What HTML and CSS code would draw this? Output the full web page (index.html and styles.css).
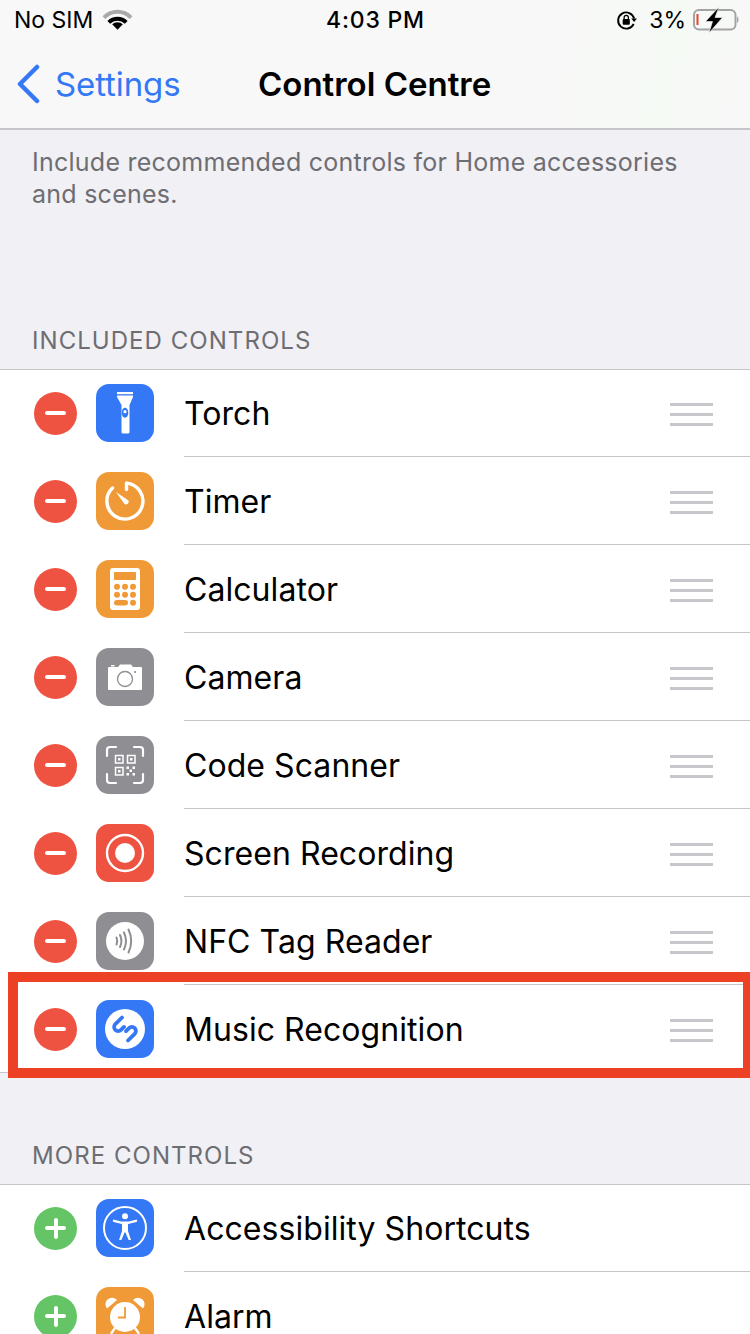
FILE: index.html
```html
<!DOCTYPE html>
<html lang="en">
<head>
	<meta charset="UTF-8">
	<title>Control Centre</title>
	<link rel="stylesheet" href="styles.css">
</head>
<body>
	<div id="page">
		<div id="top">
			<div class="status">
				<div class="status-left">
					<span>No SIM</span>
					<svg class="wifi" width="31" height="24" viewBox="0 0 32 24">
						<path d="M2 9.500C10 1.500 22 1.500 30 9.500" fill="none" stroke="#a9a9a9" stroke-width="4"/>
						<path d="M7 14.500C12 9.500 20 9.500 25 14.500" fill="none" stroke="#000" stroke-width="4"/>
						<path d="M16 22l-5.500-5.500C13.500 13.500 18.500 13.500 21.500 16.500z" fill="#000"/>
					</svg>
				</div>
				<div class="status-time">4:03 PM</div>
				<div class="status-right">
					<svg class="lock" width="21" height="21" viewBox="0 0 22 22">
						<path d="M18.500 14.500A8.500 8.500 0 1 1 19 9" fill="none" stroke="#000" stroke-width="2"/>
						<path d="M16 9h6l-3 3.500z" fill="#000"/>
						<rect x="7" y="9.500" width="7.500" height="6" rx="1" fill="#000"/>
						<path d="M8.500 10V8a2.200 2.200 0 0 1 4.500 0v2" fill="none" stroke="#000" stroke-width="1.300"/>
					</svg>
					<span>3%</span>
					<svg width="46" height="26" viewBox="0 0 46 26">
						<rect x="1" y="3" width="41.500" height="19.500" rx="5" fill="none" stroke="#a3a3a3" stroke-width="2"/>
						<rect x="3.500" y="7" width="2" height="11" fill="#e9402f"/>
						<path d="M44 9.500c2 .5 2 6 0 6.500z" fill="#a3a3a3"/>
						<path d="M26 0L12.500 14.500h7L16 26 29.500 10.500h-7.500z" fill="#000" stroke="#f9f9f9" stroke-width=".6"/>
					</svg>
				</div>
			</div>
			<div class="nav">
				<svg class="back" width="26" height="40" viewBox="0 0 26 40">
					<path d="M22 3L5 20l17 17" fill="none" stroke="#3478f6" stroke-width="4.500" stroke-linecap="round" stroke-linejoin="round"/>
				</svg>
				<span class="back-text">Settings</span>
				<span class="nav-title">Control Centre</span>
			</div>
		</div>

		<p class="note">Include recommended controls for Home accessories and scenes.</p>

		<h2 class="sec-title first">INCLUDED CONTROLS</h2>
		<ul class="list">
			<li class="row">
				<span class="btn minus"></span>
				<svg class="icon blue" viewBox="0 0 58 58">
					<rect x="21" y="8" width="16" height="2.200" fill="#fff"/>
					<path d="M21 11.500h16v1.500l-3.500 8v27a1.500 1.500 0 0 1-1.500 1.500h-5a1.500 1.500 0 0 1-1.500-1.500V21l-4.500-8z" fill="#fff"/>
					<ellipse cx="29" cy="28.700" rx="3.300" ry="5" fill="#3478f6"/>
					<circle cx="29" cy="27.700" r="1.600" fill="#fff"/>
				</svg>
				<span class="label">Torch</span>
				<span class="handle"><i></i><i></i><i></i></span>
			</li>
			<li class="row">
				<span class="btn minus"></span>
				<svg class="icon orange" viewBox="0 0 58 58">
					<path d="M30.500 11.100A18 18 0 1 1 16.500 16" fill="none" stroke="#fff" stroke-width="3.400" stroke-linecap="round"/>
					<path d="M30.500 11.100v6.400" fill="none" stroke="#fff" stroke-width="3.400" stroke-linecap="round"/>
					<path d="M20 20l12.500 8.500a2.800 2.800 0 0 1-4 3.500z" fill="#fff"/>
				</svg>
				<span class="label">Timer</span>
				<span class="handle"><i></i><i></i><i></i></span>
			</li>
			<li class="row">
				<span class="btn minus"></span>
				<svg class="icon orange" viewBox="0 0 58 58">
					<rect x="14" y="8" width="30" height="42" rx="3" fill="#fff"/>
					<rect x="18" y="12" width="22" height="8" rx="1" fill="#f09a37"/>
					<g fill="#f09a37">
						<circle cx="21" cy="26.700" r="3"/><circle cx="29" cy="26.700" r="3"/><circle cx="37" cy="26.700" r="3"/>
						<circle cx="21" cy="34.700" r="3"/><circle cx="29" cy="34.700" r="3"/><circle cx="37" cy="34.700" r="3"/>
						<rect x="18" y="40" width="14" height="5.500" rx="2.750"/><circle cx="37" cy="42.700" r="3"/>
					</g>
				</svg>
				<span class="label">Calculator</span>
				<span class="handle"><i></i><i></i><i></i></span>
			</li>
			<li class="row">
				<span class="btn minus"></span>
				<svg class="icon gray" viewBox="0 0 58 58">
					<path d="M13 19h9l2-2.500h11l2 2.500h8a1 1 0 0 1 1 1v21a1 1 0 0 1-1 1H13a1 1 0 0 1-1-1V20a1 1 0 0 1 1-1z" fill="#fff"/>
					<rect x="15" y="17" width="3.500" height="1.500" fill="#fff"/>
					<circle cx="29" cy="31" r="7.500" fill="none" stroke="#8e8e93" stroke-width="1.300"/>
					<circle cx="39" cy="24" r="1.100" fill="#8e8e93"/>
				</svg>
				<span class="label">Camera</span>
				<span class="handle"><i></i><i></i><i></i></span>
			</li>
			<li class="row">
				<span class="btn minus"></span>
				<svg class="icon gray" viewBox="0 0 58 58">
					<path d="M11 20v-6a3 3 0 0 1 3-3h6M38 11h6a3 3 0 0 1 3 3v6M47 38v6a3 3 0 0 1-3 3h-6M20 47h-6a3 3 0 0 1-3-3v-6" fill="none" stroke="#fff" stroke-width="2.200" stroke-linecap="round"/>
					<g fill="none" stroke="#fff" stroke-width="1.500">
						<rect x="19.500" y="19.500" width="7.500" height="7.500"/>
						<rect x="31.500" y="19.500" width="7.500" height="7.500"/>
						<rect x="19.500" y="31.500" width="7.500" height="7.500"/>
					</g>
					<g fill="#fff">
						<rect x="22" y="22" width="2.500" height="2.500"/><rect x="34" y="22" width="2.500" height="2.500"/><rect x="22" y="34" width="2.500" height="2.500"/>
						<rect x="30.500" y="30.500" width="2.500" height="2.500"/><rect x="36.500" y="30.500" width="2.500" height="2.500"/>
						<rect x="33.500" y="33.500" width="2.500" height="2.500"/>
						<rect x="30.500" y="37" width="2.500" height="2.500"/><rect x="36.500" y="37" width="2.500" height="2.500"/>
					</g>
				</svg>
				<span class="label">Code Scanner</span>
				<span class="handle"><i></i><i></i><i></i></span>
			</li>
			<li class="row">
				<span class="btn minus"></span>
				<svg class="icon red" viewBox="0 0 58 58">
					<circle cx="29" cy="29" r="18" fill="none" stroke="#fff" stroke-width="2.400"/>
					<circle cx="29" cy="29" r="10" fill="#fff"/>
				</svg>
				<span class="label">Screen Recording</span>
				<span class="handle"><i></i><i></i><i></i></span>
			</li>
			<li class="row">
				<span class="btn minus"></span>
				<svg class="icon gray" viewBox="0 0 58 58">
					<circle cx="29" cy="29" r="19" fill="#fff"/>
					<g fill="none" stroke="#8e8e93" stroke-width="2" stroke-linecap="round">
						<path d="M20.500 25.500a9 9 0 0 1 0 7"/>
						<path d="M24 23a14 14 0 0 1 0 12"/>
						<path d="M28 20.500a20 20 0 0 1 0 17"/>
						<path d="M32.500 17.500a27 27 0 0 1 0 23"/>
					</g>
				</svg>
				<span class="label">NFC Tag Reader</span>
				<span class="handle"><i></i><i></i><i></i></span>
			</li>
			<li class="row marked">
				<span class="btn minus"></span>
				<svg class="icon blue" viewBox="0 0 58 58">
					<circle cx="29" cy="29" r="20" fill="#fff"/>
					<g fill="none" stroke="#3478f6" stroke-width="3.800" stroke-linecap="round">
						<path d="M26 17.500l-6.700 6.700a4 4 0 0 0 5.700 5.700l3-3"/>
						<path d="M32 40.500l6.700-6.700a4 4 0 0 0-5.700-5.700l-3 3"/>
					</g>
				</svg>
				<span class="label">Music Recognition</span>
				<span class="handle"><i></i><i></i><i></i></span>
				<div class="mark"></div>
			</li>
		</ul>

		<h2 class="sec-title second">MORE CONTROLS</h2>
		<ul class="list">
			<li class="row">
				<span class="btn plus"></span>
				<svg class="icon blue" viewBox="0 0 58 58">
					<circle cx="29" cy="29" r="21" fill="none" stroke="#fff" stroke-width="2"/>
					<circle cx="29" cy="17.300" r="3" fill="#fff"/>
					<path d="M18 21.800l8 2h6l8-2" fill="none" stroke="#fff" stroke-width="2.400" stroke-linecap="round" stroke-linejoin="round"/>
					<path d="M26 23.500h6V32l3 9h-2.400L29.500 33.500h-1L25.400 41H23l3-9z" fill="#fff"/>
				</svg>
				<span class="label">Accessibility Shortcuts</span>
			</li>
			<li class="row">
				<span class="btn plus"></span>
				<svg class="icon orange" viewBox="0 0 58 58">
					<circle cx="29" cy="30" r="15" fill="#fff"/>
					<path d="M11 21.500a6.500 6.500 0 0 1 10-8.500z" fill="#fff"/>
					<path d="M47 21.500a6.500 6.500 0 0 0-10-8.500z" fill="#fff"/>
					<path d="M19 41l-3.500 5M39 41l3.500 5" fill="none" stroke="#fff" stroke-width="2.400" stroke-linecap="round"/>
					<path d="M29 20v10.500h-7" fill="none" stroke="#f09a37" stroke-width="1.800"/>
				</svg>
				<span class="label">Alarm</span>
			</li>
		</ul>
	</div>
</body>
</html>
```

FILE: styles.css
```css
*{
	margin: 0;
	padding: 0;
	box-sizing: border-box;
}
ul{
	list-style: none;
}
html, body{
	height: 100%;
	overflow: hidden;
}
body{
	background: #f0f0f5;
	font-family: Inter, "Liberation Sans", sans-serif;
	color: #000;
}
#page{
	height: 1334px;
	overflow: hidden;
}
#top{
	height: 130px;
	background: linear-gradient(100deg, #f8f8f8 70%, #f6faf5 88%, #f8f8f8);
	border-bottom: 2px solid #c6c6c8;
}
.status{
	height: 40px;
	padding: 0 11px 0 12px;
	display: grid;
	grid-template-columns: 1fr auto 1fr;
	align-items: center;
	font-size: 23px;
}
.status-left{
	display: flex;
	align-items: center;
	gap: 9px;
	padding-left: 2px;
}
.status-time{
	font-weight: 500;
	letter-spacing: 0.8px;
}
.status-right{
	display: flex;
	align-items: center;
	justify-content: flex-end;
	gap: 7px;
}
.lock{
	margin-right: 5px;
}
.nav{
	height: 88px;
	display: flex;
	align-items: center;
	padding-left: 15px;
	font-size: 33px;
}
.back{
	margin-right: 14px;
}
.back-text{
	width: 203px;
	color: #3478f6;
	letter-spacing: -0.1px;
}
.nav-title{
	font-weight: 600;
}
.note{
	padding: 16px 32px 0;
	height: 184px;
	font-size: 25px;
	line-height: 32px;
	letter-spacing: 0.25px;
	color: #6d6d72;
}
.sec-title{
	font-size: 24px;
	font-weight: 400;
	letter-spacing: 1.05px;
	color: #6d6d72;
	padding-left: 32px;
	line-height: 30px;
}
.first{
	height: 55px;
	padding-top: 12px;
}
.second{
	height: 111px;
	padding-top: 68px;
}
.list{
	background: #fff;
}
.row{
	height: 88px;
	padding-left: 34px;
	display: flex;
	align-items: center;
	position: relative;
	font-size: 32px;
	letter-spacing: 0.06px;
}
.row:first-child::before{
	content: "";
	position: absolute;
	left: 0;
	right: 0;
	top: 0;
	height: 1px;
	background: #c6c6c8;
}
.row::after{
	content: "";
	position: absolute;
	left: 184px;
	right: 0;
	bottom: 0;
	height: 1px;
	background: #c6c6c8;
}
.row:last-child::after{
	left: 0;
}
.row.marked::after{
	right: auto;
	width: 8px;
}
.btn{
	width: 43px;
	height: 43px;
	border-radius: 50%;
	position: relative;
	flex: none;
}
.minus{
	background: #ee5240;
}
.plus{
	background: #65c466;
}
.btn::before{
	content: "";
	position: absolute;
	left: 11px;
	top: 19.500px;
	width: 21px;
	height: 4px;
	border-radius: 2px;
	background: #fff;
}
.plus::after{
	content: "";
	position: absolute;
	left: 19.500px;
	top: 11px;
	width: 4px;
	height: 21px;
	border-radius: 2px;
	background: #fff;
}
.icon{
	width: 58px;
	height: 58px;
	border-radius: 13px;
	margin: 0 30px 0 19px;
	flex: none;
}
.blue{
	background: #3478f6;
}
.orange{
	background: #f09a37;
}
.gray{
	background: #8e8e93;
}
.red{
	background: #ee5240;
}
.handle{
	margin: 2px 37px 0 auto;
	width: 43px;
	display: flex;
	flex-direction: column;
	gap: 7px;
}
.handle i{
	height: 3px;
	background: #c7c7cc;
}
.mark{
	position: absolute;
	left: 8px;
	right: 0;
	top: -13px;
	bottom: -5px;
	border: 10px solid #ec4124;
	border-right-width: 7px;
}
```
